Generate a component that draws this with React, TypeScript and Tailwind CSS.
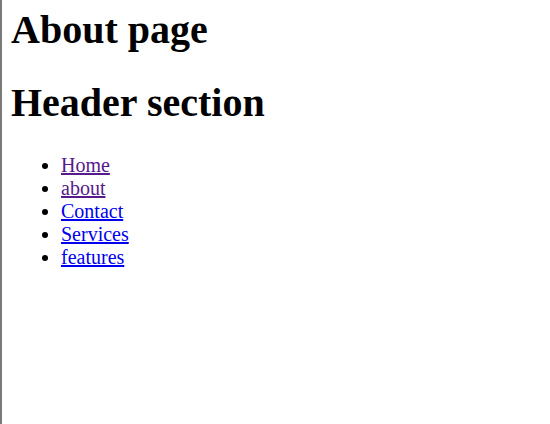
export default function App() {
  return (
    <div
      className="h-[424px] border-l-2 border-[#7a7a7a] bg-white pl-[9px] pt-[7px] text-black"
      style={{ fontFamily: '"Liberation Serif", "Times New Roman", serif' }}
    >
      <h1 className="m-0 text-[40px] font-bold leading-[46px]">About page</h1>
      <h1 className="mt-[26.8px] mb-0 text-[40px] font-bold leading-[46px]">Header section</h1>
      <ul className="mt-[28px] list-disc pl-[50px] text-[20px] leading-[23px]">
        <li><a href="#" className="text-[#551a8b] underline">Home</a></li>
        <li><a href="#" className="text-[#551a8b] underline">about</a></li>
        <li><a href="#" className="text-[#0000ee] underline">Contact</a></li>
        <li><a href="#" className="text-[#0000ee] underline">Services</a></li>
        <li><a href="#" className="text-[#0000ee] underline">features</a></li>
      </ul>
    </div>
  );
}
